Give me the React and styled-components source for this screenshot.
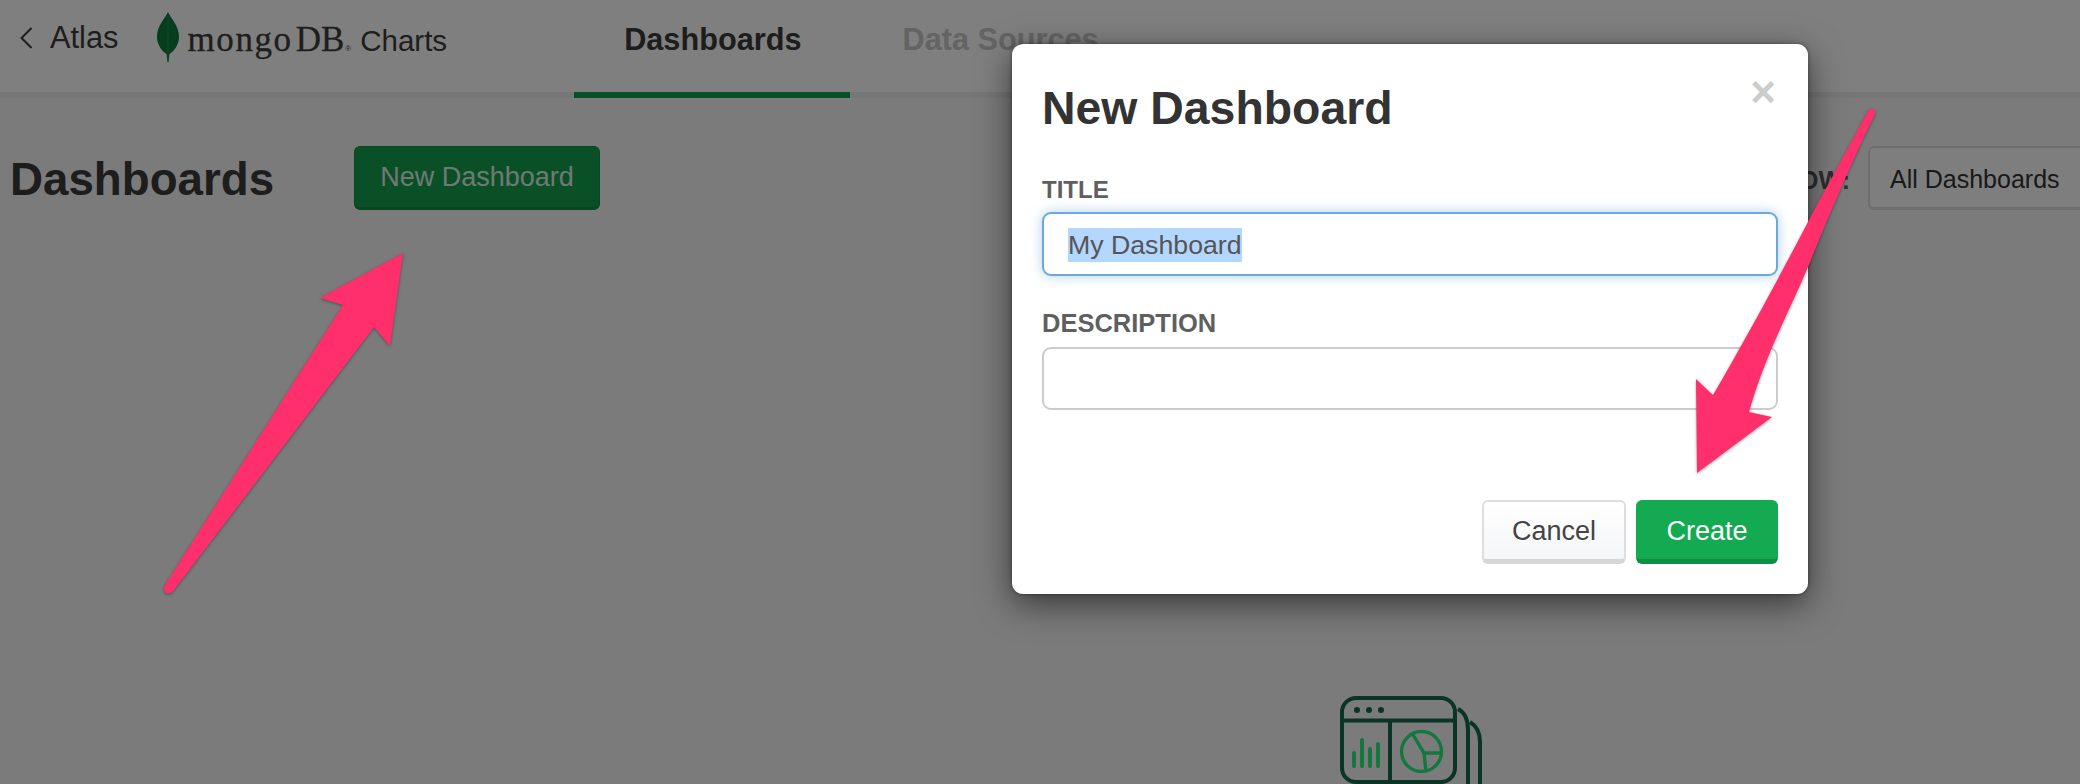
import React from "react";
import styled, { createGlobalStyle } from "styled-components";

const Global = createGlobalStyle`
  html, body { margin: 0; padding: 0; width: 2080px; height: 784px; overflow: hidden; background: #f7f7f9; }
  * { box-sizing: border-box; }
  body { font-family: "Liberation Sans", Arial, sans-serif; }
`;

const Page = styled.div`
  position: relative;
  width: 2080px;
  height: 784px;
  overflow: hidden;
  background: #f7f7f9;
  color: #3a3a3a;
`;

const Nav = styled.header`
  display: flex;
  align-items: stretch;
  height: 98px;
  padding-left: 20px;
  background: #ffffff;
  box-shadow: inset 0 -6px 0 #ececec;
`;

const BackLink = styled.a`
  display: flex;
  align-items: center;
  gap: 18px;
  height: 76px;
  font-size: 30.8px;
  color: #3c3c3c;
`;

const Brand = styled.div`
  display: flex;
  align-items: flex-start;
  margin-left: 38px;
  height: 92px;
  padding-top: 12px;
`;

const Wordmark = styled.div`
  display: flex;
  align-items: baseline;
  margin-left: 7px;
  height: 50px;
  padding-top: 6px;
  font-family: "Liberation Serif", serif;
  color: #3c3c3c;
`;

const Mongo = styled.span`
  font-size: 35px;
  letter-spacing: 1.6px;
  line-height: 44px;
  -webkit-text-stroke: 0.3px #3c3c3c;
`;

const DB = styled.span`
  font-size: 35px;
  line-height: 44px;
  margin-left: 3px;
  -webkit-text-stroke: 0.3px #3c3c3c;
`;

const Registered = styled.span`
  font-family: "Liberation Sans", sans-serif;
  font-size: 8px;
  margin-left: 1px;
`;

const Product = styled.span`
  font-family: "Liberation Sans", sans-serif;
  font-size: 29.5px;
  margin-left: 9px;
`;

const Tabs = styled.nav`
  display: flex;
  margin-left: 127px;
`;

const Tab = styled.a`
  display: flex;
  align-items: flex-start;
  height: 98px;
  padding: 22px ${(p) => (p.$active ? "49px" : "0")} 0 ${(p) => (p.$active ? "50px" : "52px")};
  font-size: 30.7px;
  font-weight: 700;
  line-height: 36px;
  color: ${(p) => (p.$active ? "#3a3a3a" : "#c8c8c8")};
  border-bottom: 6px solid ${(p) => (p.$active ? "#13a04e" : "transparent")};
`;

const Toolbar = styled.section`
  display: flex;
  align-items: center;
  height: 64px;
  margin-top: 48px;
  padding-left: 10px;
`;

const PageTitle = styled.h1`
  margin: 3px 0 0;
  font-size: 45.7px;
  line-height: 50px;
  font-weight: 700;
  color: #3a3a3a;
`;

const PrimaryBar = styled.button`
  flex: none;
  width: 246px;
  height: 64px;
  margin-left: 80px;
  padding: 0;
  font: 400 27px "Liberation Sans", sans-serif;
  color: rgba(255, 255, 255, 0.88);
  background: #13a04e;
  border: 1px solid #118c44;
  border-bottom-width: 3px;
  border-radius: 6px;
`;

const Filter = styled.div`
  display: flex;
  align-items: center;
  gap: 18px;
  margin-left: auto;
  margin-right: -40px;
`;

const FilterLabel = styled.span`
  padding-top: 4px;
  font-size: 25px;
  font-weight: 700;
  color: #5a5a5a;
`;

const FilterSelect = styled.div`
  display: flex;
  align-items: center;
  width: 252px;
  height: 64px;
  padding: 3px 0 0 20px;
  font-size: 25px;
  color: #333333;
  background: #fcfcfc;
  border: 2px solid #dcdcdc;
  border-bottom-width: 3px;
  border-radius: 6px;
`;

const EmptyIcon = styled.div`
  position: absolute;
  left: 1338px;
  top: 694px;
  display: flex;
`;

const Overlay = styled.div`
  position: absolute;
  inset: 0;
  padding: 44px 0 0 1012px;
  background: rgba(0, 0, 0, 0.5);
`;

const Modal = styled.div`
  position: relative;
  display: flex;
  flex-direction: column;
  width: 796px;
  height: 550px;
  padding: 41px 30px 30px 30px;
  background: #ffffff;
  border-radius: 11px;
  box-shadow: 0 10px 34px rgba(0, 0, 0, 0.55), 0 0 4px rgba(0, 0, 0, 0.4);
`;

const ModalTitle = styled.h2`
  margin: 0;
  font-size: 46.4px;
  line-height: 46px;
  font-weight: 700;
  color: #333333;
`;

const Close = styled.span`
  position: absolute;
  top: 25px;
  right: 32px;
  font-size: 44px;
  line-height: 46px;
  font-weight: 700;
  color: #cccccc;
`;

const FieldLabel = styled.label`
  display: block;
  margin: ${(p) => p.$top}px 0 ${(p) => p.$bottom}px;
  font-size: ${(p) => p.$size}px;
  line-height: 25px;
  font-weight: 700;
  color: #5f5f5f;
`;

const Field = styled.div`
  display: flex;
  align-items: center;
  width: 736px;
  height: ${(p) => (p.$focused ? 64 : 63)}px;
  padding: 2px 0 0 24px;
  font-size: 26.7px;
  color: #555555;
  background: #ffffff;
  border: 2px solid ${(p) => (p.$focused ? "#6ba9dc" : "#cccccc")};
  border-radius: 9px;
  box-shadow: ${(p) => (p.$focused ? "0 0 12px rgba(107, 169, 220, 0.55)" : "none")};
`;

const Selected = styled.span`
  display: inline-block;
  height: 34px;
  line-height: 34px;
  background: #b3d7ff;
`;

const Actions = styled.div`
  display: flex;
  justify-content: flex-end;
  gap: 10px;
  width: 736px;
  margin-top: 90px;
`;

const ActionButton = styled.button`
  width: ${(p) => p.$width}px;
  height: 64px;
  padding: 2px 0 0;
  font: 400 27px "Liberation Sans", sans-serif;
  border-radius: 6px;
  color: ${(p) => (p.$primary ? "#ffffff" : "#444444")};
  background: ${(p) => (p.$primary ? "#13aa52" : "linear-gradient(#ffffff, #f5f6f8)")};
  border: ${(p) => (p.$primary ? "1px solid #13aa52" : "2px solid #dedede")};
  border-bottom: 5px solid ${(p) => (p.$primary ? "#0f8f45" : "#d6d6d6")};
`;

const ArrowLayer = styled.svg`
  position: absolute;
  inset: 0;
  width: 2080px;
  height: 784px;
  pointer-events: none;
  filter: drop-shadow(0 1px 1.5px rgba(0, 0, 0, 0.35));
`;

const Leaf = () => (
  <svg width="24" height="50" viewBox="0 0 24 50">
    <path d="M12 0C15 7 23 13 23 25C23 33 18 39 13.5 42L12.6 50H11.4L10.5 42C6 39 1 33 1 25C1 13 9 7 12 0Z" fill="#0c7a3a" />
    <path d="M12 4V50" stroke="#3b9a5c" strokeWidth="0.7" />
  </svg>
);

const BackChevron = () => (
  <svg width="12" height="22" viewBox="0 0 12 22" fill="none" stroke="#3c3c3c" strokeWidth="2">
    <path d="M11.5 1L1.5 11L11.5 21" />
  </svg>
);

const DashboardIcon = () => (
  <svg width="150" height="90" viewBox="1338 694 150 90" fill="none" strokeWidth="4">
    <g stroke="#14694a">
      <rect x="1342" y="698" width="113" height="84" rx="14" />
      <path d="M1342 720.5H1455M1390 720.5V782" />
      <path d="M1458 709Q1468 714 1468 730V790M1470 722Q1480 728 1480 742V790" />
    </g>
    <g fill="#14694a" stroke="none">
      <circle cx="1357" cy="710" r="3" />
      <circle cx="1369" cy="710" r="3" />
      <circle cx="1381" cy="710" r="3" />
    </g>
    <g stroke="#24f07c" strokeLinecap="round">
      <path d="M1354 753V766M1362 740V766M1370 749V766M1378 744V766" />
    </g>
    <g stroke="#24f07c" strokeWidth="3.4">
      <circle cx="1421.5" cy="751.5" r="20" />
      <path d="M1412 733L1424 753L1441 753M1424 753L1426 771" />
    </g>
  </svg>
);

export default function App() {
  return (
    <Page>
      <Global />
      <Nav>
        <BackLink>
          <BackChevron />
          Atlas
        </BackLink>
        <Brand>
          <Leaf />
          <Wordmark>
            <Mongo>mongo</Mongo>
            <DB>DB</DB>
            <Registered>®</Registered>
            <Product>Charts</Product>
          </Wordmark>
        </Brand>
        <Tabs>
          <Tab $active>Dashboards</Tab>
          <Tab>Data Sources</Tab>
        </Tabs>
      </Nav>
      <Toolbar>
        <PageTitle>Dashboards</PageTitle>
        <PrimaryBar>New Dashboard</PrimaryBar>
        <Filter>
          <FilterLabel>SHOW:</FilterLabel>
          <FilterSelect>All Dashboards</FilterSelect>
        </Filter>
      </Toolbar>
      <EmptyIcon>
        <DashboardIcon />
      </EmptyIcon>
      <Overlay>
        <Modal>
          <ModalTitle>New Dashboard</ModalTitle>
          <Close>×</Close>
          <FieldLabel $top={46} $bottom={10} $size={24}>TITLE</FieldLabel>
          <Field $focused>
            <Selected>My Dashboard</Selected>
          </Field>
          <FieldLabel $top={35} $bottom={11} $size={25.5}>DESCRIPTION</FieldLabel>
          <Field />
          <Actions>
            <ActionButton $width={144}>Cancel</ActionButton>
            <ActionButton $width={142} $primary>Create</ActionButton>
          </Actions>
        </Modal>
      </Overlay>
      <ArrowLayer viewBox="0 0 2080 784">
        <path
          d="M164.5 586L343 305L320 298L403 253L390 346L374 327L174 590Q169 596 165 592Q163 589 164.5 586Z"
          fill="#fe2f6b"
        />
        <path
          d="M1868 111Q1870 108 1873 109Q1876 111 1875 114C1850 165 1825 225 1808 267C1790 310 1765 355 1749 412L1772 417L1697 473L1696 379L1713 395C1745 340 1775 285 1808 222C1830 180 1850 145 1868 111Z"
          fill="#fe2f6b"
        />
      </ArrowLayer>
    </Page>
  );
}
